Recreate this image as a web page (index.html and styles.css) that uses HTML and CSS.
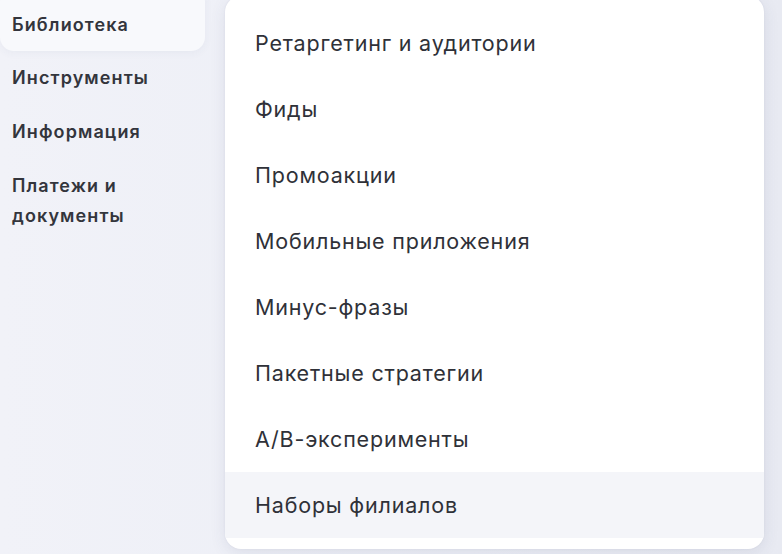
FILE: index.html
```html
<!DOCTYPE html>
<html lang="ru">
<head>
    <meta charset="UTF-8">
    <meta name="viewport" content="width=device-width, initial-scale=1.0">
    <title>Библиотека</title>
    <link rel="stylesheet" href="styles.css">
</head>
<body>
    <div class="layout">
        <!-- Left menu -->
        <ul class="side-menu">
            <li class="active"><a href="#">Библиотека</a></li>
            <li><a href="#">Инструменты</a></li>
            <li><a href="#">Информация</a></li>
            <li><a href="#">Платежи и документы</a></li>
        </ul>

        <!-- Library dropdown -->
        <div class="dropdown">
            <ul class="dropdown-list">
                <li><a href="#">Ретаргетинг и аудитории</a></li>
                <li><a href="#">Фиды</a></li>
                <li><a href="#">Промоакции</a></li>
                <li><a href="#">Мобильные приложения</a></li>
                <li><a href="#">Минус-фразы</a></li>
                <li><a href="#">Пакетные стратегии</a></li>
                <li><a href="#">A/B-эксперименты</a></li>
                <li class="hover"><a href="#">Наборы филиалов</a></li>
            </ul>
        </div>
    </div>
</body>
</html>
```

FILE: styles.css
```css
* {
    margin: 0;
    padding: 0;
    box-sizing: border-box;
}

html, body {
    height: 100%;
}

body {
    font-family: 'Inter', 'Noto Sans', sans-serif;
    background: linear-gradient(90deg, #f1f2f8 0%, #eceef6 60%, #e8eaf2 100%);
    color: #2f3138;
    overflow: hidden;
}

.layout {
    display: flex;
    align-items: flex-start;
    gap: 20px;
}

.side-menu {
    list-style: none;
    width: 205px;
    flex-shrink: 0;
}

.side-menu li {
    padding: 12px;
    border-radius: 14px;
}

.side-menu li.active {
    background-color: #f8f9fc;
    box-shadow: 0 2px 8px rgba(60, 70, 110, 0.05);
    margin-top: -12px;
    padding-top: 22px;
    padding-bottom: 11px;
}

.side-menu a {
    display: block;
    max-width: 160px;
    font-size: 18px;
    font-weight: 600;
    letter-spacing: 1.1px;
    line-height: 30px;
    color: #33353c;
    text-decoration: none;
}

.dropdown {
    width: 539px;
    margin-top: -4px;
    padding: 14px 0 11px;
    background-color: #fff;
    border-radius: 16px;
    box-shadow: 0 4px 16px rgba(60, 70, 110, 0.10), 0 0 2px rgba(60, 70, 110, 0.08);
    overflow: hidden;
}

.dropdown-list {
    list-style: none;
}

.dropdown-list li a {
    display: block;
    padding: 0 30px;
    height: 66px;
    line-height: 66px;
    font-size: 21.5px;
    letter-spacing: 0.8px;
    color: #2f3138;
    text-decoration: none;
}

.dropdown-list li.hover a {
    background-color: #f4f5f9;
}
```
